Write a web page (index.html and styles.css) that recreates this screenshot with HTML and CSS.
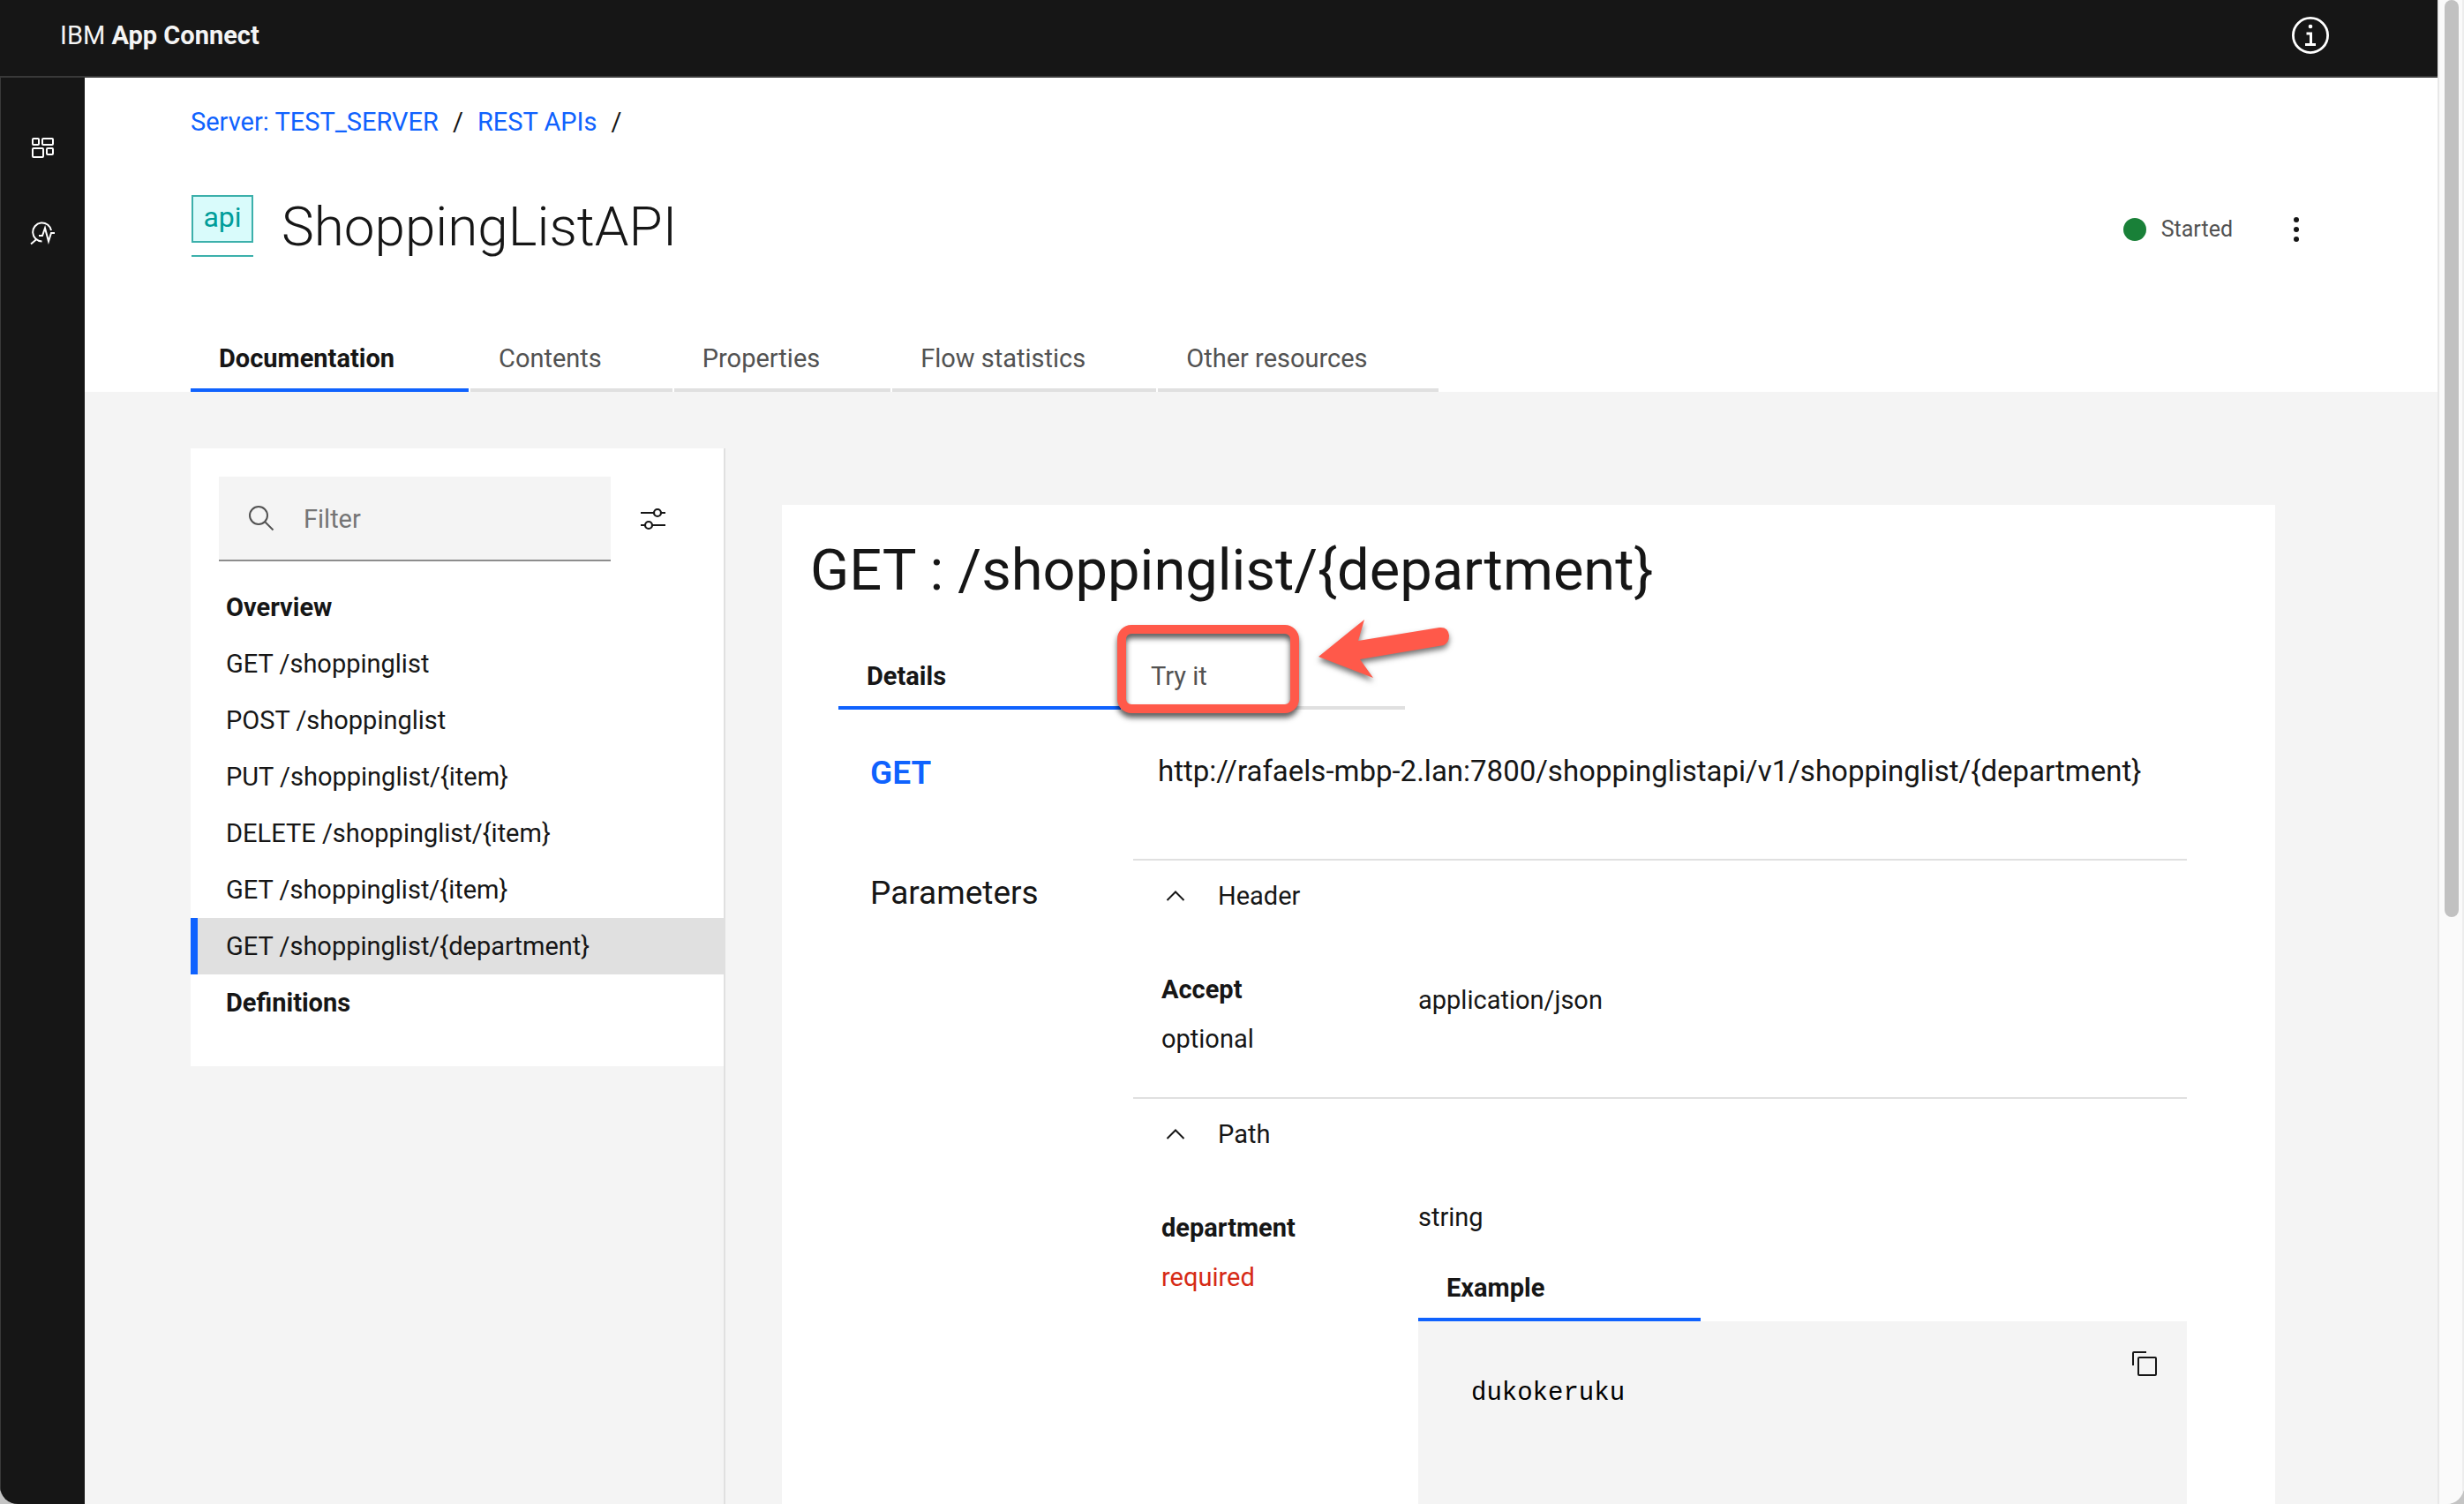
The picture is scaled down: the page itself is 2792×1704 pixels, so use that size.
FILE: index.html
```
<!DOCTYPE html>
<html lang="en">
<head>
<meta charset="utf-8">
<title>IBM App Connect</title>
<link rel="stylesheet" href="styles.css">
</head>
<body>
<div class="window">
  <div class="app">
    <header class="topbar">
      <div class="brand">IBM <strong>App Connect</strong></div>
      <button class="icon-button" type="button" aria-label="About">
        <svg width="42" height="42" viewBox="0 0 42 42" fill="none" stroke="currentColor"><circle cx="21" cy="21" r="19.6" stroke-width="2.8"/><circle cx="21" cy="11" r="2.3" fill="currentColor" stroke="none"/><path d="M16.500 19h5v12.500M15 31.500h12" stroke-width="3"/></svg>
      </button>
    </header>
    <div class="shell">
      <nav class="rail" aria-label="Main">
        <a href="#" class="rail-link" aria-label="Dashboard">
          <svg width="28" height="28" viewBox="0 0 28 28" fill="none" stroke="currentColor" stroke-width="2"><rect x="3" y="3" width="7" height="7" rx="1"/><rect x="14" y="3" width="12" height="7" rx="1"/><rect x="3" y="14" width="12" height="10" rx="1"/><rect x="19" y="14" width="7" height="7" rx="1"/></svg>
        </a>
        <a href="#" class="rail-link" aria-label="Monitoring">
          <svg width="28" height="28" viewBox="0 0 28 28" fill="none" stroke="currentColor" stroke-width="2"><path d="M24 11A10.500 10.500 0 1 0 13.500 23.500M7.500 21L1 26.500M10 17h4l3-8.500 4 15 3-9.500h4"/></svg>
        </a>
      </nav>
      <main class="page">
        <div class="page-head">
          <nav class="breadcrumb" aria-label="Breadcrumb">
            <a href="#">Server: TEST_SERVER</a><span>/</span><a href="#">REST APIs</a><span>/</span>
          </nav>
          <div class="title-row">
            <div class="api-badge" aria-hidden="true"><span>api</span></div>
            <h1>ShoppingListAPI</h1>
            <div class="status"><i class="dot"></i>Started</div>
            <button class="icon-button overflow" type="button" aria-label="More actions">
              <svg width="32" height="32" viewBox="0 0 32 32" fill="currentColor"><circle cx="16" cy="5" r="3"/><circle cx="16" cy="16" r="3"/><circle cx="16" cy="27" r="3"/></svg>
            </button>
          </div>
          <div class="tabs" role="tablist">
            <button class="tab active" type="button" role="tab" aria-selected="true">Documentation</button>
            <button class="tab" type="button" role="tab">Contents</button>
            <button class="tab" type="button" role="tab">Properties</button>
            <button class="tab" type="button" role="tab">Flow statistics</button>
            <button class="tab" type="button" role="tab">Other resources</button>
          </div>
        </div>
        <div class="content">
          <aside class="side">
            <div class="side-panel">
              <div class="filter-row">
                <label class="search">
                  <svg width="32" height="32" viewBox="0 0 32 32" fill="none" stroke="currentColor" stroke-width="2"><circle cx="13" cy="13" r="10"/><path d="M20.500 20.500l9 9"/></svg>
                  <input type="text" placeholder="Filter" aria-label="Filter">
                </label>
                <button class="icon-button filter-button" type="button" aria-label="Filter options">
                  <svg width="32" height="32" viewBox="0 0 32 32" fill="none" stroke="currentColor" stroke-width="2.200"><circle cx="21" cy="9" r="4"/><path d="M2 9h15M25 9h5"/><circle cx="11" cy="23" r="4"/><path d="M2 23h5M15 23h15"/></svg>
                </button>
              </div>
              <ul class="api-list">
                <li><a href="#" class="group">Overview</a></li>
                <li><a href="#">GET /shoppinglist</a></li>
                <li><a href="#">POST /shoppinglist</a></li>
                <li><a href="#">PUT /shoppinglist/{item}</a></li>
                <li><a href="#">DELETE /shoppinglist/{item}</a></li>
                <li><a href="#">GET /shoppinglist/{item}</a></li>
                <li><a href="#" class="selected" aria-current="true">GET /shoppinglist/{department}</a></li>
                <li><a href="#" class="group">Definitions</a></li>
              </ul>
            </div>
          </aside>
          <article class="card">
            <h2>GET : /shoppinglist/{department}</h2>
            <div class="tabs detail-tabs" role="tablist">
              <button class="tab wide active" type="button" role="tab" aria-selected="true">Details</button>
              <div class="marked">
                <button class="tab wide" type="button" role="tab">Try it</button>
                <span class="ring"></span>
                <svg class="arrow" width="160" height="90" viewBox="0 0 160 90"><path fill="#ff594a" d="M4 50L56 8L49 32L141 17Q151 16 152 26Q152 34 146 37L51 53L66 74Z"/></svg>
              </div>
            </div>
            <section class="row url-row">
              <h3 class="method">GET</h3>
              <p class="url">http://rafaels-mbp-2.lan:7800/shoppinglistapi/v1/shoppinglist/{department}</p>
            </section>
            <section class="row">
              <h3 class="section-title">Parameters</h3>
              <div class="groups">
                <div class="param-group">
                  <button class="toggle" type="button" aria-expanded="true">
                    <svg width="22" height="12" viewBox="0 0 22 12" fill="none" stroke="currentColor" stroke-width="2"><path d="M1.500 11L11 1.500L20.500 11"/></svg>Header
                  </button>
                  <div class="param">
                    <div class="param-name"><strong>Accept</strong><span>optional</span></div>
                    <div class="param-value plain">application/json</div>
                  </div>
                </div>
                <div class="param-group">
                  <button class="toggle" type="button" aria-expanded="true">
                    <svg width="22" height="12" viewBox="0 0 22 12" fill="none" stroke="currentColor" stroke-width="2"><path d="M1.500 11L11 1.500L20.500 11"/></svg>Path
                  </button>
                  <div class="param">
                    <div class="param-name"><strong>department</strong><span class="required">required</span></div>
                    <div class="param-value">
                      <div>string</div>
                      <div class="tabs example-tabs" role="tablist"><button class="tab wide active" type="button" role="tab" aria-selected="true">Example</button></div>
                      <div class="code-box">
                        <code>dukokeruku</code>
                        <button class="icon-button copy" type="button" aria-label="Copy">
                          <svg width="32" height="32" viewBox="0 0 32 32" fill="none" stroke="currentColor" stroke-width="2"><rect x="9" y="9" width="20" height="20" rx="1"/><path d="M3 18V4a1 1 0 0 1 1-1h14"/></svg>
                        </button>
                      </div>
                    </div>
                  </div>
                </div>
              </div>
            </section>
          </article>
        </div>
      </main>
    </div>
  </div>
  <div class="scrollbar" aria-hidden="true"><div class="thumb"></div></div>
</div>
</body>
</html>
```
FILE: styles.css
```
* { box-sizing: border-box; }

body {
  margin: 0;
  background: #c4c4c4;
  color: #161616;
  font: 29px/36px Roboto, sans-serif;
}

button, input { font: inherit; color: inherit; }
button { border: 0; padding: 0; background: none; cursor: pointer; }
a { color: inherit; text-decoration: none; }
h1, h2, h3, p, ul { margin: 0; padding: 0; font-weight: 400; }
ul { list-style: none; }
strong { font-weight: 700; }
svg { display: block; flex: none; }

.window {
  display: flex;
  height: 100vh;
  overflow: hidden;
  border-radius: 0 0 20px 20px;
  background: #f4f4f4;
}

.app { flex: 1; min-width: 0; display: flex; flex-direction: column; }

.topbar {
  flex: none;
  display: flex;
  justify-content: space-between;
  align-items: center;
  height: 88px;
  padding: 0 123px 6px 68px;
  background: #161616;
  border-bottom: 2px solid #393939;
  color: #f4f4f4;
}
.topbar .icon-button { color: #fff; }

.icon-button { display: grid; place-items: center; flex: none; }

.shell { flex: 1; min-height: 0; display: flex; }

.rail {
  flex: none;
  width: 96px;
  padding: 32px 0;
  background: #161616;
  box-shadow: inset 1px 0 #393939;
  color: #fff;
}
.rail-link { display: grid; place-items: center; height: 96px; }

.page { flex: 1; min-width: 0; display: flex; flex-direction: column; }

.page-head {
  flex: none;
  padding: 32px 120px 0;
  background: #fff;
}

.breadcrumb { display: flex; gap: 16px; }
.breadcrumb a { color: #0f62fe; }

.title-row { display: flex; align-items: center; height: 80px; margin: 64px 0 70px; }

.api-badge {
  width: 70px;
  height: 70px;
  margin: 0 32px 8px 1px;
  border-bottom: 2px solid #3cb0ab;
}
.api-badge span {
  display: block;
  height: 54px;
  border: 2px solid #3cb0ab;
  background: #d9fbfb;
  color: #009d9a;
  font-size: 32px;
  line-height: 46px;
  text-align: center;
}

h1 { flex: 1; font-size: 62px; line-height: 74px; font-weight: 300; padding-bottom: 6px; }

.status { display: flex; align-items: center; gap: 17px; color: #525252; font-size: 25px; }
.dot { width: 26px; height: 26px; border-radius: 50%; background: #198038; }
.overflow { width: 80px; height: 80px; margin-left: 32px; }

.tabs { display: flex; gap: 2px; }
.tab {
  height: 74px;
  padding: 2px 80px 0 32px;
  border-bottom: 4px solid #e0e0e0;
  color: #525252;
  text-align: left;
  white-space: nowrap;
}
.tab.active { min-width: 315px; border-color: #0f62fe; color: #161616; font-weight: 700; }
.tab.wide { width: 320px; }

.content { flex: 1; min-height: 0; display: flex; padding: 64px 184px 0 120px; overflow: hidden; }

.side { flex: none; width: 606px; border-right: 2px solid #e0e0e0; }
.side-panel { padding: 32px 0 40px; background: #fff; }

.filter-row { display: flex; padding: 0 32px; margin-bottom: 20px; }
.search {
  display: flex;
  align-items: center;
  gap: 32px;
  width: 444px;
  height: 96px;
  padding: 0 32px;
  background: #f4f4f4;
  border-bottom: 2px solid #8d8d8d;
  color: #525252;
}
.search input { flex: 1; min-width: 0; padding: 2px 0 0; border: 0; background: none; outline: 0; }
.search input::placeholder { color: #757575; opacity: 1; }
.filter-button { width: 96px; height: 96px; }

.api-list a {
  display: block;
  padding-left: 32px;
  border-left: 8px solid transparent;
  line-height: 64px;
}
.api-list .group { font-weight: 700; }
.api-list .selected { background: #e0e0e0; border-color: #0f62fe; }

.card {
  flex: 1;
  min-width: 0;
  height: 1400px;
  margin: 64px 0 0 64px;
  padding: 32px 100px 0 32px;
  background: #fff;
}

h2 { font-size: 65px; line-height: 84px; }

.detail-tabs { margin: 42px 0 0 32px; }

/* Call-out drawn over the "Try it" tab */
.marked { position: relative; }
.ring {
  position: absolute;
  left: -6px;
  top: -22px;
  width: 206px;
  height: 100px;
  border: 10px solid #ff594a;
  border-radius: 16px;
  filter: drop-shadow(0 5px 3px rgba(0, 0, 0, .65));
  pointer-events: none;
}
.arrow {
  position: absolute;
  left: 218px;
  top: -36px;
  filter: drop-shadow(0 4px 3px rgba(0, 0, 0, .55));
  pointer-events: none;
}

.row { display: grid; grid-template-columns: 298px 1fr; padding-left: 68px; }
.url-row { padding-top: 52px; padding-bottom: 77px; }
.method { color: #0f62fe; font-size: 37px; line-height: 40px; font-weight: 600; }
.url { padding-left: 28px; font-size: 33px; white-space: nowrap; }
.section-title { padding-top: 19px; font-size: 37px; line-height: 40px; }

.param-group { border-top: 2px solid #e0e0e0; }
.toggle { display: flex; align-items: center; gap: 37px; height: 80px; padding-left: 37px; }
.param { display: grid; grid-template-columns: 323px 1fr; line-height: 56px; }
.param-name { display: flex; flex-direction: column; padding: 38px 0 38px 32px; }
.required { color: #d62a15; }
.param-value { padding-top: 26px; }
.param-value.plain { padding-top: 50px; }
.example-tabs { margin-top: 16px; }

.code-box { display: flex; justify-content: space-between; height: 400px; padding-left: 60px; background: #f4f4f4; }
.code-box code { padding-top: 62px; font: 29px/40px "Liberation Mono", monospace; color: #000; }
.copy { width: 96px; height: 96px; }

.scrollbar {
  flex: none;
  width: 30px;
  padding-left: 6px;
  background: #fafafa;
  border-left: 2px solid #e8e8e8;
  border-right: 2px solid #ededed;
}
.thumb { width: 16px; height: 61vh; border-radius: 8px; background: #c1c1c1; }
```
